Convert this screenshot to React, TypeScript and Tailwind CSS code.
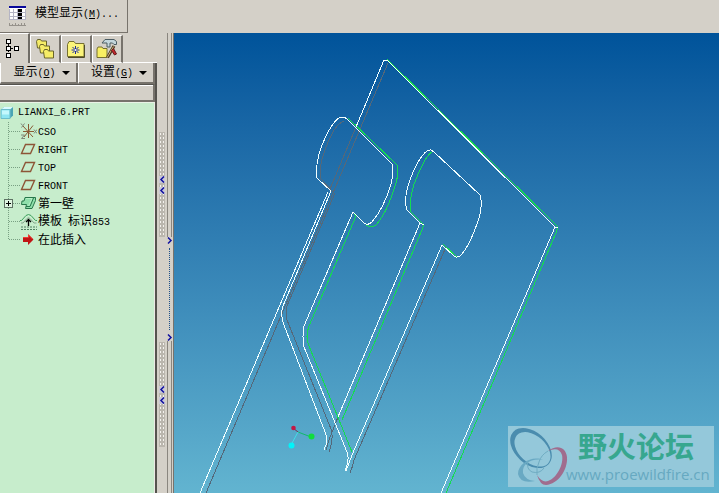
import type { ReactNode } from "react";

const uiFont = "font-['Noto_Sans_CJK_SC',sans-serif]";

function Mono({ children }: { children: ReactNode }) {
  return (
    <span className="font-['Liberation_Mono','Noto_Sans_CJK_SC',monospace] text-[10px] whitespace-pre">{children}</span>
  );
}

function TableIcon() {
  return (
    <svg width="18" height="22" viewBox="0 0 18 22" shapeRendering="crispEdges" aria-hidden="true">
      <rect x="0" y="0" width="17" height="14" fill="#fff" />
      <path d="M0 6.500h17M0 10.500h17M0 13.500h17M.5 3v11M4.500 3v11M8.500 3v11M12.500 3v11M16.500 3v11" stroke="#b4b4c4" fill="none" />
      <rect x="0" y="0" width="17" height="2" fill="#0a0a9c" />
      <path d="M9 3h4v3h-4zM9 7h4v3h-4zM9 11h4v2h-4z" fill="#000" />
      <path d="M.5 17v3M3.500 18v2M6.500 17v3M9.500 18v2M12.500 17v3M15.500 17v3M0 19.500h17" stroke="#96928b" fill="none" />
    </svg>
  );
}

function TreeTabIcon() {
  return (
    <svg width="14" height="20" viewBox="0 0 14 20" shapeRendering="crispEdges" aria-hidden="true">
      <path d="M2.500 5v10M5 9.500h4" stroke="#000" strokeDasharray="2 1" fill="none" />
      <g fill="#fff" stroke="#000">
        <rect x=".5" y=".5" width="4" height="4" />
        <rect x=".5" y="7.500" width="4" height="4" />
        <rect x="8.500" y="7.500" width="4" height="4" />
        <rect x=".5" y="14.500" width="4" height="4" />
      </g>
    </svg>
  );
}

function FoldersIcon() {
  const folder = "M.5 2.500l1-2h3l1 1.500h5v7h-9z";
  return (
    <svg width="19" height="20" viewBox="0 0 19 20" aria-hidden="true">
      <g fill="#f5ec67" stroke="#69642b">
        <path d={folder} />
        <path d={folder} transform="translate(3 5)" />
        <path d={folder} transform="translate(7 10)" />
      </g>
    </svg>
  );
}

function FavoriteIcon() {
  return (
    <svg width="18" height="17" viewBox="0 0 18 17" aria-hidden="true">
      <path d="M.5 3.500l1.500-3h5l1.500 2h8.500v13H.5z" fill="#fbf47a" stroke="#77712f" />
      <path d="M1 16.500h16.500V4" stroke="#4e4a2a" fill="none" />
      <path d="M8.500 5v8M4.500 9h8M5.500 6l6 6M11.500 6l-6 6" stroke="#1a2a9e" />
      <circle cx="8.500" cy="9" r="1" fill="#fff" />
    </svg>
  );
}

function ToolsIcon() {
  return (
    <svg width="22" height="20" viewBox="0 0 22 20" aria-hidden="true">
      <path d="M1 10l1-2h4l1 1.500h4v9H1z" fill="#f8ef62" stroke="#77712f" />
      <path d="M11.500 18.500L18 7" stroke="#4c3a22" strokeWidth="3" />
      <path d="M11.500 18L17.500 7.500" stroke="#d0b07c" />
      <path d="M6 4l3-3.500h9l2.500 2v3h-2.500l-1.500-1.500h-2.500v4h-3v-4H8z" fill="#c3d6dc" stroke="#4b5c63" />
      <path d="M17.500 9.500l3 5.500-2 1-3-4.500z" fill="#c3262b" stroke="#651c1d" />
    </svg>
  );
}

function PartIcon() {
  return (
    <svg width="14" height="14" viewBox="0 0 14 14" aria-hidden="true">
      <path d="M1 3.500L4 1h9v8.500L10 12.500H1z" fill="#4aa4b4" />
      <path d="M1 3.500L4 1h9l-3 2.500z" fill="#d9fbff" />
      <path d="M1 3.500h9v9H1z" fill="#8fe6f2" stroke="#6cbecb" />
      <path d="M2 4.500h7v4H2z" fill="#c4f8fd" />
    </svg>
  );
}

function CsysIcon() {
  return (
    <svg width="17" height="18" viewBox="0 0 17 18" aria-hidden="true">
      <path d="M8.500 2v14M3 4l10 11M13 3.500L4 15M3 9.500h11" stroke="#8a5a34" fill="none" />
      <path d="M1 1.500l1.500 2M4.500 1.500l-3 4M14 7.500l3 4M17 7.500l-3 4M1 13h3.500l-3 3.500h3.500" stroke="#7e8878" fill="none" />
    </svg>
  );
}

function PlaneIcon() {
  return (
    <svg width="17" height="18" viewBox="0 0 17 18" aria-hidden="true">
      <path d="M5.500 4.500h9L10.500 13.500H1.500z" stroke="#8d5537" strokeWidth="1.400" fill="none" />
    </svg>
  );
}

function WallIcon() {
  return (
    <svg width="17" height="18" viewBox="0 0 17 18" aria-hidden="true">
      <path d="M5 3.500h10.500v3L12 14.500H5.500L6.500 10.500H1.500L2 7h2z" fill="#8fdfab" stroke="#27764a" />
      <path d="M13.500 4l-3.500 8.500H6" stroke="#27764a" fill="none" />
      <path d="M6 4.500h6L8.500 12" stroke="#b5efc6" fill="none" />
    </svg>
  );
}

function FormIcon() {
  return (
    <svg width="17" height="18" viewBox="0 0 17 18" aria-hidden="true">
      <path d="M0 8.500h1.500L6 3.500Q8.500 1.500 11 3.500L15.500 8.500H17" stroke="#3c9f5c" fill="none" />
      <path d="M1 11h2L7 6.500Q8.500 5 10 6.500L14 11h2.500" stroke="#84a48c" fill="none" />
      <path d="M8.500 7v7M6 10L8.500 7.500 11 10" stroke="#000" strokeWidth="1.300" fill="none" />
      <path d="M1 15h16M1 17.500h16" stroke="#4f7f60" strokeDasharray="2 1" fill="none" />
    </svg>
  );
}

function InsertIcon() {
  return (
    <svg width="17" height="18" viewBox="0 0 17 18" aria-hidden="true">
      <path d="M3 7h5V4L13.500 9.500 8 15v-3H3z" fill="#c01414" />
      <path d="M3 7.500h5.500V5l4 4" stroke="#ee3b33" fill="none" />
    </svg>
  );
}

type Row = { icon: ReactNode; label: ReactNode; expandable?: boolean };

const rows: Row[] = [
  { icon: <CsysIcon />, label: <Mono>CSO</Mono> },
  { icon: <PlaneIcon />, label: <Mono>RIGHT</Mono> },
  { icon: <PlaneIcon />, label: <Mono>TOP</Mono> },
  { icon: <PlaneIcon />, label: <Mono>FRONT</Mono> },
  { icon: <WallIcon />, label: "第一壁", expandable: true },
  { icon: <FormIcon />, label: <>模板<Mono> </Mono>标识<Mono>853</Mono></> },
  { icon: <InsertIcon />, label: "在此插入" },
];

function TreeRow({ row, last }: { row: Row; last: boolean }) {
  return (
    <li className="flex h-[18px] items-center">
      <span className="flex h-full w-5 shrink-0">
        <svg width="20" height="18" viewBox="0 0 20 18" shapeRendering="crispEdges" aria-hidden="true">
          <path d={last ? "M8.500 0v10" : "M8.500 0v18"} stroke="#79a083" strokeDasharray="1 1" />
          <path d="M9 9.500h11" stroke="#79a083" strokeDasharray="1 1" />
          {row.expandable && (
            <g>
              <rect x="4.500" y="5.500" width="8" height="8" fill="#dff5e1" stroke="#5f7264" />
              <path d="M6 9.500h5M8.500 7v5" stroke="#000" />
            </g>
          )}
        </svg>
      </span>
      {row.icon}
      <span className="ml-px">{row.label}</span>
    </li>
  );
}

function MenuButton({ label, letter }: { label: string; letter: string }) {
  return (
    <button
      type="button"
      className="flex flex-1 items-center justify-end gap-1.5 border-r-2 border-b-2 border-l border-r-[#77736c] border-b-[#77736c] border-l-white pr-1.5"
    >
      <span className="whitespace-nowrap">
        {label}
        <Mono>(<u>{letter}</u>)</Mono>
      </span>
      <svg width="8" height="4" viewBox="0 0 8 4" aria-hidden="true">
        <path d="M0 0h8L4 4z" fill="#000" />
      </svg>
    </button>
  );
}

function Tab({ label, selected, children }: { label: string; selected?: boolean; children: ReactNode }) {
  return (
    <button
      type="button"
      role="tab"
      aria-label={label}
      aria-selected={!!selected}
      className={
        selected
          ? "flex h-full w-[30px] items-center border-t border-r-2 border-t-white border-r-[#6f6c66] pl-1.5"
          : "flex h-7 w-[31px] items-center justify-center border-t border-r-2 border-b border-l border-white border-r-[#77736c]"
      }
    >
      {children}
    </button>
  );
}

function Chevron({ right }: { right?: boolean }) {
  return (
    <svg width="6" height="7" viewBox="0 0 6 7" aria-hidden="true">
      <path d={right ? "M1 .5l3 3-3 3" : "M5 .5l-3 3 3 3"} stroke="#1010a0" strokeWidth="1.500" fill="none" />
    </svg>
  );
}

function Grip() {
  return (
    <button
      type="button"
      aria-label="收起模型树"
      className="flex h-[105px] w-1.5 flex-col items-center justify-center gap-1 bg-[radial-gradient(circle,#f4f2ee_1px,#bab6ae_1px)] bg-[size:3px_4px]"
    >
      <span className="bg-[#c9c7d6]"><Chevron /></span>
      <span className="bg-[#c9c7d6]"><Chevron /></span>
    </button>
  );
}

function Splitter() {
  return (
    <div className="flex w-[17px] shrink-0 border-r border-[#77736c]">
      <div className="flex w-[9px] flex-col items-center pt-[99px]">
        <Grip />
        <div className="h-[105px]" />
        <Grip />
      </div>
      <div className="flex w-[7px] flex-col items-center">
        <div className="h-[204px] w-[5px] border-x border-[#8a867f]" />
        <button type="button" aria-label="展开" className="flex h-[104px] flex-col items-center justify-between">
          <Chevron right />
          <span className="my-1 w-0 flex-1 border-l border-dotted border-[#1f4f8a]" />
          <Chevron right />
        </button>
        <div className="w-[5px] flex-1 border-x border-[#8a867f]" />
      </div>
    </div>
  );
}

function Model() {
  return (
    <svg
      className="absolute inset-0 h-full w-full"
      viewBox="174 33 545 460"
      preserveAspectRatio="xMinYMin meet"
      fill="none"
      shapeRendering="crispEdges"
      role="img"
      aria-label="三维模型线框"
    >
      <g stroke="#54687a">
        <path d="M388 63L206 493" />
        <path d="M356 127L330 189" />
        <path d="M344 121C335 124 329 138 324 153C320 162 320 172 320 178L334 193" />
        <path d="M335 193L287 306Q285 313 287 320L331 429Q334 437 329 452" />
        <path d="M338 417L329 440L326 450" />
        <path d="M446 247L354 460Q353 466 350 473" />
      </g>
      <g stroke="#14dc50">
        <path d="M387 59L557 226L558 228L446 493" />
        <path d="M348 118L397 165Q399 172 396 183C391 200 384 216 376 225Q371 229 366 225" />
        <path d="M354 213L356 216L309 326Q305 337 309 346L352 452" />
        <path d="M433 151Q426 156 421 168C413 184 409 197 411 212L424 225L342 420" />
        <path d="M443 244L457 257" />
      </g>
      <g stroke="#f2ffff">
        <path d="M356 127L384 60L387 60L555 227L558 227M555 227L441 493" />
        <path d="M328 192L200 493" />
        <path d="M331 191L317 178C315 165 320 148 327 134Q336 117 342 117Q345 117 347 119L392 164Q394 173 391 184C386 201 378 215 372 222Q368 226 364 223L353 212L304 326Q302 337 304 347L347 452Q350 460 345 471" />
        <path d="M331 191L283 306Q280 315 284 325L325 432Q329 440 324 450" />
        <path d="M338 417L420 223L407 210C403 198 408 183 414 170Q424 149 431 150L434 152L480 195Q483 205 479 218C474 233 467 248 462 254Q458 259 454 256L442 245L352 455L346 471" />
        <path d="M420 223L424 225" />
      </g>
      <g shapeRendering="auto">
        <path d="M293 428L298 432" stroke="#75304f" />
        <path d="M298 432L311 437" stroke="#12b86c" />
        <path d="M298 432L291 445" stroke="#42dce9" />
        <circle cx="293.500" cy="428" r="2.300" fill="#c21845" />
        <circle cx="311.500" cy="436.500" r="3" fill="#10dd3c" />
        <circle cx="291.500" cy="445.500" r="3" fill="#00f4fa" />
      </g>
    </svg>
  );
}

function Watermark() {
  return (
    <div className="absolute right-[5px] bottom-1.5 flex h-[61px] w-[206px] bg-[#94c8da]">
      <svg className="shrink-0" width="58" height="61" viewBox="0 0 58 61" overflow="visible" aria-hidden="true">
        <g fillRule="evenodd">
          <path
            d="M-24 0a24 16 0 1 0 48 0a24 16 0 1 0-48 0zM-19 0a21 13.500 0 1 0 42 0a21 13.500 0 1 0-42 0z"
            transform="translate(23 22) rotate(42)"
            fill="#4a8cae"
          />
          <path
            d="M40 25C49 18 58 21 59 31C60 44 50 58 38 59Q32 59 29 49Q34 57 40 55C49 52 56 38 54 29Q51 20 40 25Z"
            fill="#a06d8e"
          />
          <path d="M35 34C25 29 10 37 10 48Q12 58 27 55Q17 54 15 47C14 38 23 32 35 34Z" fill="#69a9c3" />
        </g>
        <path d="M20 35Q18 43 24 46Q32 48 36 42M40 25Q33 29 31 36Q28 42 29 49" stroke="#70acc2" fill="none" />
      </svg>
      <div className="flex flex-1 flex-col">
        <div className="pl-3 text-[29px] leading-[38px] font-bold whitespace-nowrap text-[#37a78f]">野火论坛</div>
        <div className="font-['Open_Sans',sans-serif] text-[15px] leading-5 whitespace-nowrap text-[#66a9c1]">
          www.proewildfire.cn
        </div>
      </div>
    </div>
  );
}

export default function App() {
  return (
    <div className={`flex min-h-screen flex-col bg-[#d4d0c8] text-[12px] leading-4 text-black ${uiFont}`}>
      <header className="flex h-[33px] shrink-0">
        <button
          type="button"
          className="flex w-32 items-start gap-2 border-r border-b border-[#77736c] pt-1 pl-[9px] whitespace-nowrap"
        >
          <span className="pt-0.5"><TableIcon /></span>
          <span>
            模型显示<Mono>(<u>M</u>)...</Mono>
          </span>
        </button>
      </header>
      <div className="flex flex-1">
        <aside className="flex w-[157px] shrink-0 flex-col">
          <div role="tablist" className="flex h-[30px] items-end">
            <Tab label="模型树" selected><TreeTabIcon /></Tab>
            <Tab label="文件夹浏览器"><FoldersIcon /></Tab>
            <Tab label="收藏夹"><FavoriteIcon /></Tab>
            <Tab label="工具"><ToolsIcon /></Tab>
            <div className="flex-1 border-b border-white" />
          </div>
          <div className="flex flex-1 flex-col border-r-2 border-[#55534e]">
            <div className="flex h-[21px]">
              <MenuButton label="显示" letter="O" />
              <MenuButton label="设置" letter="G" />
            </div>
            <div className="h-[18px] border-t border-r-2 border-b-2 border-[#77736c] border-t-[#55534e]">
              <div className="h-px bg-white" />
            </div>
            <div className="flex-1 border-t border-r border-t-[#e9f3e6] border-r-[#ebe9e4] bg-[#c7edcc] pt-px">
              <div className="flex h-[18px] items-center gap-1">
                <PartIcon />
                <Mono>LIANXI_6.PRT</Mono>
              </div>
              <ul>
                {rows.map((row, i) => (
                  <TreeRow key={i} row={row} last={i === rows.length - 1} />
                ))}
              </ul>
            </div>
          </div>
        </aside>
        <Splitter />
        <main className="relative flex-1 overflow-hidden bg-linear-to-b from-[#00539a] to-[#62b4d0]">
          <Model />
          <Watermark />
        </main>
      </div>
    </div>
  );
}
